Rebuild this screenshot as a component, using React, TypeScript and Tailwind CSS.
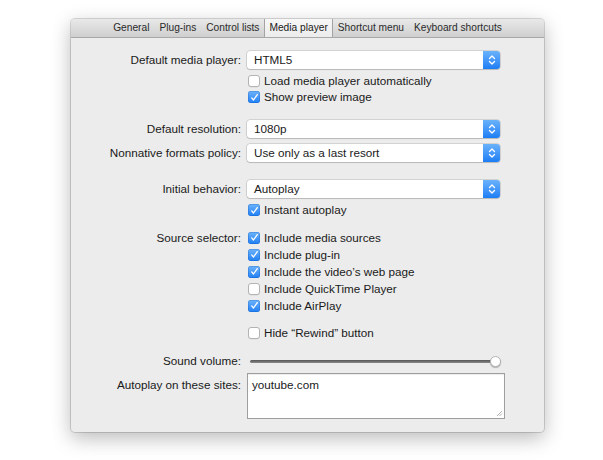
import React from 'react';

const font = { fontFamily: '"Liberation Sans", Arial, sans-serif' };

function Check({ checked }: { checked: boolean }) {
  if (checked) {
    return (
      <span className="flex h-[12px] w-[12px] shrink-0 items-center justify-center rounded-[3px] bg-gradient-to-b from-[#6cb3fb] to-[#1c7ff4] shadow-[inset_0_0_0_0.5px_rgba(0,70,170,0.45)]">
        <svg width="9" height="9" viewBox="0 0 9 9">
          <path d="M1.7 4.9 L3.5 7 L7.3 1.6" fill="none" stroke="white" strokeWidth="1.3" strokeLinecap="round" strokeLinejoin="round" />
        </svg>
      </span>
    );
  }
  return <span className="h-[12px] w-[12px] shrink-0 rounded-[3px] border border-[#b3b3b3] bg-white shadow-[0_0.5px_0.5px_rgba(0,0,0,0.08)]" />;
}

function CheckRow({ checked, label, className = '' }: { checked: boolean; label: string; className?: string }) {
  return (
    <div className={'flex items-center pl-[1px] ' + className}>
      <Check checked={checked} />
      <span className="ml-[4px]">{label}</span>
    </div>
  );
}

function Select({ value }: { value: string }) {
  return (
    <div className="flex h-[18px] w-[253px] items-stretch overflow-hidden rounded-[3px] bg-white shadow-[0_0_0_0.5px_rgba(0,0,0,0.22),0_1px_1px_rgba(0,0,0,0.12)]">
      <div className="flex flex-1 items-center pl-[7px]">{value}</div>
      <div className="flex w-[17px] items-center justify-center bg-gradient-to-b from-[#69b2fb] to-[#1a7df4]">
        <svg width="8" height="12" viewBox="0 0 8 12">
          <path d="M1.5 4.5 L4 2 L6.5 4.5 M1.5 7.5 L4 10 L6.5 7.5" fill="none" stroke="white" strokeWidth="1.3" strokeLinecap="round" strokeLinejoin="round" />
        </svg>
      </div>
    </div>
  );
}

function Row({ label, children, className = '' }: { label: string; children: React.ReactNode; className?: string }) {
  return (
    <div className={'flex items-center ' + className}>
      <div className="w-[170px] shrink-0 text-right">{label}</div>
      <div className="ml-[6px] flex-1">{children}</div>
    </div>
  );
}

const tabs = ['General', 'Plug-ins', 'Control lists', 'Media player', 'Shortcut menu', 'Keyboard shortcuts'];

export default function App() {
  return (
    <div className="h-[460px] w-[603px] bg-white pl-[71px] pt-[19px] text-[#1a1a1a]" style={font}>
      <div className="flex h-[413px] w-[473px] flex-col overflow-hidden rounded-[4px] bg-[#ececec] text-[11.7px] shadow-[0_0_0_1px_rgba(0,0,0,0.14),0_6px_20px_rgba(0,0,0,0.28)]">
        {/* tab strip */}
        <div className="flex h-[19px] shrink-0 items-stretch justify-center border-b border-[#a9a9a9] bg-gradient-to-b from-[#e9e9e9] to-[#cfcfcf] text-[10.2px]">
          {tabs.map((t) =>
            t === 'Media player' ? (
              <div key={t} className="flex items-center border-x border-[#a3a3a3] bg-gradient-to-b from-[#f7f7f7] to-[#ececec] px-[4px]">
                {t}
              </div>
            ) : (
              <div key={t} className="flex items-center px-[5px] text-[#2a2a2a]">
                {t}
              </div>
            )
          )}
        </div>

        <div className="flex flex-col pt-[13px]">
          <Row label="Default media player:" className="h-[18px]">
            <Select value="HTML5" />
          </Row>
          <div className="ml-[176px] mt-[4px] flex flex-col">
            <CheckRow checked={false} label="Load media player automatically" className="h-[16px]" />
            <CheckRow checked={true} label="Show preview image" className="h-[16px]" />
          </div>

          <Row label="Default resolution:" className="mt-[15px] h-[18px]">
            <Select value="1080p" />
          </Row>
          <Row label="Nonnative formats policy:" className="mt-[6px] h-[18px]">
            <Select value="Use only as a last resort" />
          </Row>

          <Row label="Initial behavior:" className="mt-[18px] h-[18px]">
            <Select value="Autoplay" />
          </Row>
          <div className="ml-[176px] mt-[4px]">
            <CheckRow checked={true} label="Instant autoplay" className="h-[16px]" />
          </div>

          <Row label="Source selector:" className="mt-[11px] h-[17px]">
            <CheckRow checked={true} label="Include media sources" className="h-[17px]" />
          </Row>
          <div className="ml-[176px] flex flex-col">
            <CheckRow checked={true} label="Include plug-in" className="h-[17px]" />
            <CheckRow checked={true} label="Include the video’s web page" className="h-[17px]" />
            <CheckRow checked={false} label="Include QuickTime Player" className="h-[17px]" />
            <CheckRow checked={true} label="Include AirPlay" className="h-[17px]" />
          </div>
          <div className="ml-[176px] mt-[11px]">
            <CheckRow checked={false} label="Hide “Rewind” button" className="h-[16px]" />
          </div>

          <Row label="Sound volume:" className="mt-[12px] h-[16px]">
            <div className="relative ml-[3px] flex h-[16px] w-[251px] items-center">
              <div className="h-[3px] w-full rounded-full bg-gradient-to-b from-[#555555] to-[#8c8c8c]" />
              <div className="absolute right-[0px] top-[3px] h-[11px] w-[11px] rounded-full border border-[#b5b5b5] bg-white shadow-[0_1px_1px_rgba(0,0,0,0.25)]" />
            </div>
          </Row>
          <div className="mt-[4px] flex items-start">
            <div className="w-[170px] shrink-0 pt-[3px] text-right">Autoplay on these sites:</div>
            <div className="relative ml-[6px] h-[46px] w-[258px] border border-[#9e9e9e] bg-white px-[4px] pt-[2px] shadow-[inset_0_1px_1px_rgba(0,0,0,0.08)]">
              youtube.com
              <svg className="absolute bottom-[1px] right-[1px]" width="8" height="8" viewBox="0 0 8 8">
                <path d="M7 2 L2 7 M7 4.5 L4.5 7" stroke="#9a9a9a" strokeWidth="0.8" />
              </svg>
            </div>
          </div>
        </div>
      </div>
    </div>
  );
}
